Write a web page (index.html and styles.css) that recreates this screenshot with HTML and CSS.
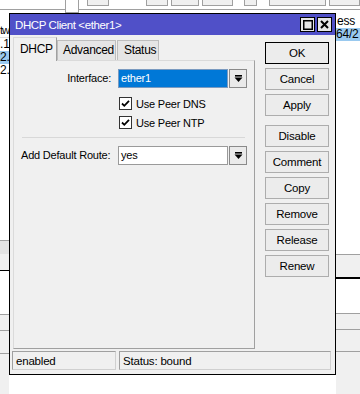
FILE: index.html
```html
<!DOCTYPE html>
<html lang="en">
<head>
    <meta charset="UTF-8">
    <meta name="viewport" content="width=device-width, initial-scale=1.0">
    <title>DHCP Client</title>
    <link rel="stylesheet" href="styles.css">
</head>
<body>

<div class="desk">
    <!-- the list window behind the dialog -->
    <div class="toolbar">
        <span class="tb tb-field" style="width: 14px; margin-left: 65px"></span>
        <span class="tb" style="width: 23px; margin-left: 5px"></span>
        <span class="tb" style="width: 23px; margin-left: 34px"></span>
        <span class="tb" style="width: 30px"></span>
        <span class="tb" style="width: 34px"></span>
        <span class="tb" style="width: 13px; margin-left: 8px"></span>
        <span class="tb" style="width: 63px; margin-left: 9px"></span>
        <span class="tb" style="width: 34px"></span>
    </div>

    <div class="panes">
        <div class="pane pane-left">
            <div class="head">tw</div>
            <div class="row">.1</div>
            <div class="row selected">2.</div>
            <div class="row">2.</div>
            <div class="fill"></div>
            <div class="foot foot-left"></div>
        </div>
        <div class="pane pane-right">
            <div class="head head-right">ess</div>
            <div class="row selected">64/2</div>
            <div class="fill"></div>
            <div class="foot foot-right"></div>
        </div>
    </div>

    <!-- DHCP client dialog -->
    <div class="win">
        <div class="titlebar">
            <span class="title">DHCP Client &lt;ether1&gt;</span>
            <span class="tbtn">
                <svg width="10" height="10" viewBox="0 0 10 10"><rect x="0.75" y="0.75" width="8.5" height="8.5" fill="none" stroke="#000" stroke-width="1.5"/></svg>
            </span>
            <span class="tbtn">
                <svg width="9" height="9" viewBox="0 0 9 9"><path d="M1 1 L8 8 M8 1 L1 8" stroke="#000" stroke-width="2"/></svg>
            </span>
        </div>

        <div class="main">
            <div class="tabcol">
                <div class="tabs">
                    <span class="tab active">DHCP</span>
                    <span class="tab tab-adv">Advanced</span>
                    <span class="tab tab-status">Status</span>
                </div>
                <div class="panel">
                    <div class="field">
                        <label class="lbl">Interface:</label>
                        <span class="input selected-input">ether1</span>
                        <span class="drop">
                            <svg width="9" height="9" viewBox="0 0 9 9"><rect x="1" y="1" width="7" height="1.6" fill="#000"/><polygon points="0.5,3.6 8.5,3.6 4.5,8" fill="#000"/></svg>
                        </span>
                    </div>
                    <div class="check check-first">
                        <span class="box">
                            <svg width="11" height="11" viewBox="0 0 11 11"><path d="M2 5.5 L4.3 7.8 L9 2.8" fill="none" stroke="#000" stroke-width="1.8"/></svg>
                        </span>
                        Use Peer DNS
                    </div>
                    <div class="check">
                        <span class="box">
                            <svg width="11" height="11" viewBox="0 0 11 11"><path d="M2 5.5 L4.3 7.8 L9 2.8" fill="none" stroke="#000" stroke-width="1.8"/></svg>
                        </span>
                        Use Peer NTP
                    </div>
                    <hr class="sep">
                    <div class="field">
                        <label class="lbl lbl-left">Add Default Route:</label>
                        <span class="input">yes</span>
                        <span class="drop">
                            <svg width="9" height="9" viewBox="0 0 9 9"><rect x="1" y="1" width="7" height="1.6" fill="#000"/><polygon points="0.5,3.6 8.5,3.6 4.5,8" fill="#000"/></svg>
                        </span>
                    </div>
                </div>
            </div>

            <div class="buttons">
                <button class="btn default">OK</button>
                <button class="btn">Cancel</button>
                <button class="btn">Apply</button>
                <button class="btn btn-gap">Disable</button>
                <button class="btn">Comment</button>
                <button class="btn">Copy</button>
                <button class="btn">Remove</button>
                <button class="btn">Release</button>
                <button class="btn">Renew</button>
            </div>
        </div>

        <div class="statusbar">
            <span class="stat stat-state">enabled</span>
            <span class="stat stat-text">Status: bound</span>
        </div>
    </div>
</div>

</body>
</html>
```

FILE: styles.css
```css
body {
    margin: 0;
    padding: 0;
    background-color: #fff;
    font-family: "Liberation Sans", Arial, sans-serif;
    font-size: 11px;
    letter-spacing: -0.2px;
    color: #000;
}

.desk {
    position: relative;
    width: 360px;
    height: 394px;
    overflow: hidden;
}

/* background window */
.toolbar {
    display: flex;
    gap: 3px;
    height: 10px;
    border-bottom: 1px solid #a0a0a0;
    box-sizing: border-box;
}

.tb {
    height: 6px;
    margin-top: -2px;
    background-color: #f0f0f0;
    border: 1px solid #a0a0a0;
}

.tb-field {
    height: 13px;
    background-color: #fff;
}

.panes {
    display: flex;
    justify-content: space-between;
}

.pane {
    display: flex;
    flex-direction: column;
    height: 384px;
    overflow: hidden;
}

.pane-left {
    width: 9px;
}

.pane-right {
    width: 24px;
}

.head,
.row {
    white-space: nowrap;
    height: 13px;
    line-height: 13px;
    font-size: 12px;
}

.pane-left .head {
    margin-top: 14px;
    border-bottom: 1px solid #e0e0e0;
    font-size: 11px;
    letter-spacing: -1px;
    text-align: right;
}

.pane-left .row {
    text-align: right;
}

.head-right {
    margin-top: 3px;
    padding: 2px 0 0 1px;
}

.row.selected {
    background-color: #99c9ef;
}

.fill {
    flex: 1;
}

.foot-left {
    height: 154px;
    background: linear-gradient(#a0a0a0 0 1px, #e3e3e3 1px 14px, #f0f0f0 14px 30px, #000 30px 31px, #fff 31px 74px, #a0a0a0 74px 75px, #f0f0f0 75px 90px, #a0a0a0 90px 91px, #f0f0f0 91px 113px, #a0a0a0 113px 114px, #f0f0f0 114px);
}

.foot-right {
    height: 140px;
    background: linear-gradient(#a0a0a0 0 1px, #f0f0f0 1px 23px, #000 23px 25px, #fff 25px 59px, #a0a0a0 59px 60px, #f0f0f0 60px 75px, #a0a0a0 75px 76px, #f0f0f0 76px 97px, #a0a0a0 97px 98px, #f0f0f0 98px);
}

/* dialog window */
.win {
    position: absolute;
    left: 9px;
    top: 13px;
    width: 327px;
    height: 362px;
    box-sizing: border-box;
    border: 1px solid #000;
    background-color: #f0f0f0;
    display: flex;
    flex-direction: column;
}

.titlebar {
    display: flex;
    align-items: center;
    height: 21px;
    background-color: #5050c8;
    padding: 0 3px 0 5px;
}

.title {
    flex: 1;
    color: #fff;
    font-size: 11.5px;
    letter-spacing: -0.4px;
}

.tbtn {
    display: flex;
    align-items: center;
    justify-content: center;
    width: 13px;
    height: 13px;
    margin-left: 2px;
    background-color: #e6e6e6;
    border: 1px solid #000;
}

.main {
    display: flex;
    flex: 1;
}

.tabcol {
    margin: 2px 0 0 3px;
    width: 242px;
    display: flex;
    flex-direction: column;
}

.tabs {
    display: flex;
    align-items: flex-end;
    height: 23px;
}

.tab {
    box-sizing: border-box;
    height: 20px;
    line-height: 18px;
    padding-left: 5px;
    background-color: #e5e5e5;
    border: 1px solid #bdbdbd;
    border-bottom: none;
    font-size: 12px;
    letter-spacing: -0.3px;
}

.tab.active {
    width: 44px;
    height: 24px;
    line-height: 22px;
    padding-left: 6px;
    margin-bottom: -1px;
    background-color: #f0f0f0;
    border-color: #dadada;
    border-right-color: #a0a0a0;
    position: relative;
    z-index: 1;
}

.tab-adv {
    width: 59px;
}

.tab-status {
    width: 42px;
    margin-left: 1px;
    padding-left: 6px;
}

.panel {
    box-sizing: border-box;
    height: 289px;
    border: 1px solid #dadada;
    border-right-color: #a0a0a0;
    border-bottom-color: #a0a0a0;
    padding: 7px 0 0 7px;
}

.field {
    display: flex;
    align-items: center;
    height: 20px;
}

.lbl {
    width: 90px;
    margin-right: 7px;
    text-align: right;
    white-space: nowrap;
}

.lbl-left {
    text-align: left;
}

.input {
    box-sizing: border-box;
    width: 110px;
    height: 19px;
    line-height: 17px;
    padding-left: 2px;
    background-color: #fff;
    border: 1px solid #9a9a9a;
}

.selected-input {
    background-color: #0078d7;
    color: #fff;
    border-color: #7a9ac0;
}

.drop {
    box-sizing: border-box;
    display: flex;
    align-items: center;
    justify-content: center;
    width: 18px;
    height: 19px;
    margin-left: 1px;
    background-color: #eaeaea;
    border: 1px solid #8a8a8a;
}

.check {
    display: flex;
    align-items: center;
    height: 13px;
    margin: 6px 0 0 98px;
}

.check-first {
    margin-top: 9px;
}

.box {
    box-sizing: border-box;
    display: flex;
    align-items: center;
    justify-content: center;
    width: 13px;
    height: 13px;
    margin-right: 4px;
    background-color: #fff;
    border: 1px solid #333;
}

.sep {
    border: 0;
    height: 1px;
    background-color: #d8d8d8;
    margin: 8px 9px 7px 1px;
}

.buttons {
    display: flex;
    flex-direction: column;
    gap: 4px;
    margin: 7px 0 0 10px;
}

.btn {
    box-sizing: border-box;
    width: 64px;
    height: 22px;
    padding: 0;
    background-color: #ececec;
    border: 1px solid #adadad;
    font-family: "Liberation Sans", Arial, sans-serif;
    font-size: 11.5px;
    letter-spacing: -0.2px;
    color: #000;
}

.btn.default {
    border: 1px solid #000;
}

.btn-gap {
    margin-top: 5px;
}

.statusbar {
    display: flex;
    gap: 3px;
    margin: 0 4px 4px 2px;
    height: 19px;
}

.stat {
    box-sizing: border-box;
    height: 19px;
    line-height: 18px;
    padding-left: 3px;
    border: 1px solid #d0d0d0;
    border-top-color: #a0a0a0;
    border-left-color: #a0a0a0;
    font-size: 11.5px;
}

.stat-state {
    width: 104px;
}

.stat-text {
    flex: 1;
}
```
